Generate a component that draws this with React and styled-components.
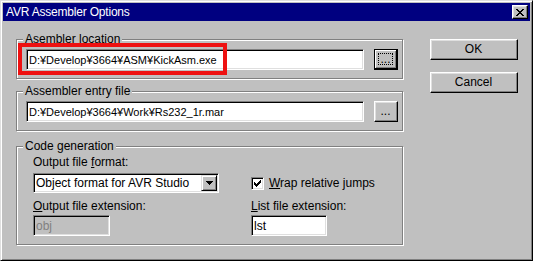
import React from "react";
import styled, { createGlobalStyle } from "styled-components";

const Global = createGlobalStyle`
  html, body { margin: 0; padding: 0; background: #c0c0c0; overflow: hidden; }
  #root { width: 533px; height: 261px; }
`;

const Window = styled.div`
  width: 533px;
  height: 261px;
  box-sizing: border-box;
  background: #c0c0c0;
  border: 1px solid;
  border-color: #dfdfdf #000 #000 #dfdfdf;
  box-shadow: inset 1px 1px #fff, inset -1px -1px #808080;
  padding: 2px;
  display: flex;
  flex-direction: column;
  font: 12px/14px "Liberation Sans", Arial, sans-serif;
  color: #000;
`;

const TitleBar = styled.div`
  height: 18px;
  flex: none;
  background: #000080;
  color: #fff;
  display: flex;
  align-items: center;
  justify-content: space-between;
  padding: 0 2px 0 3px;
`;

const Title = styled.span`
  font-size: 12px;
  letter-spacing: -0.2px;
`;

const CloseButton = styled.div`
  width: 16px;
  height: 14px;
  box-sizing: border-box;
  background: #c0c0c0;
  border: 1px solid;
  border-color: #fff #000 #000 #fff;
  box-shadow: inset -1px -1px #808080, inset 1px 1px #dfdfdf;
  display: flex;
  align-items: center;
  justify-content: center;
`;

const Body = styled.div`
  display: flex;
  gap: 27px;
  padding: 18px 0 0 13px;
`;

const LeftCol = styled.div`
  width: 387px;
  display: flex;
  flex-direction: column;
`;

const Group = styled.div`
  position: relative;
  box-sizing: border-box;
  border: 1px solid #808080;
  box-shadow: inset 1px 1px #fff, 1px 1px #fff;
  margin-top: ${(p) => p.$mt || 0}px;
  padding: ${(p) => p.$pad};
  height: ${(p) => (p.$h ? `${p.$h}px` : "auto")};
`;

const FileRow = styled.div`
  display: flex;
  gap: 10px;
  align-items: flex-start;
`;

const GroupLabel = styled.span`
  position: absolute;
  top: -8px;
  left: 6px;
  padding: 0 2px;
  background: #c0c0c0;
  white-space: nowrap;
`;

const Highlight = styled.div`
  position: absolute;
  left: 1px;
  top: 3px;
  width: 209px;
  height: 32px;
  box-sizing: border-box;
  border: 4px solid #ee1111;
  pointer-events: none;
`;

const TextField = styled.input`
  box-sizing: border-box;
  width: ${(p) => p.$w}px;
  height: 21px;
  margin: 0;
  padding: 0 1px 0 2px;
  font: inherit;
  font-size: ${(p) => p.$fs || 12}px;
  color: ${(p) => (p.disabled ? "#808080" : "#000")};
  background: ${(p) => (p.disabled ? "#c0c0c0" : "#fff")};
  border: 1px solid;
  border-color: #808080 #fff #fff #808080;
  box-shadow: inset 1px 1px #000, inset -1px -1px #dfdfdf;
  outline: none;
  &:disabled { -webkit-text-fill-color: #808080; opacity: 1; }
`;

const Button = styled.div`
  box-sizing: border-box;
  width: ${(p) => p.$w}px;
  height: 21px;
  background: #c0c0c0;
  border: 1px solid;
  border-color: ${(p) => (p.$default ? "#000" : "#fff #000 #000 #fff")};
  box-shadow: ${(p) =>
    p.$default
      ? "inset -1px -1px #000, inset 1px 1px #fff, inset -2px -2px #808080"
      : "inset -1px -1px #808080, inset 1px 1px #dfdfdf"};
  padding: ${(p) => (p.$default ? "3px 4px 4px 3px" : "2px 3px 3px 2px")};
  display: flex;
  flex: none;
`;

const Face = styled.span`
  flex: 1;
  display: flex;
  align-items: center;
  justify-content: center;
  border: 1px dotted ${(p) => (p.$focused ? "#000" : "transparent")};
  line-height: 12px;
`;

const RightCol = styled.div`
  display: flex;
  flex-direction: column;
  gap: 12px;
`;

const CodeGrid = styled.div`
  display: grid;
  grid-template-columns: 218px auto;
  align-items: center;
`;

const FieldLabel = styled.div`
  grid-column: ${(p) => (p.$span ? "1 / -1" : "auto")};
  margin-top: ${(p) => p.$mt || 0}px;
  white-space: nowrap;
  line-height: 14px;
`;

const Combo = styled.div`
  box-sizing: border-box;
  width: 186px;
  height: 20px;
  margin-top: 4px;
  background: #fff;
  border: 1px solid;
  border-color: #808080 #fff #fff #808080;
  box-shadow: inset 1px 1px #000, inset -1px -1px #dfdfdf;
  padding: 1px;
  display: flex;
  align-items: center;
`;

const ComboText = styled.span`
  flex: 1;
  padding-left: 1px;
  white-space: nowrap;
  overflow: hidden;
`;

const ComboButton = styled.div`
  width: 16px;
  height: 16px;
  box-sizing: border-box;
  background: #c0c0c0;
  border: 1px solid;
  border-color: #dfdfdf #000 #000 #dfdfdf;
  box-shadow: inset 1px 1px #fff, inset -1px -1px #808080;
  display: flex;
  align-items: center;
  justify-content: center;
`;

const CheckRow = styled.label`
  display: flex;
  align-items: center;
  gap: 5px;
  margin-top: 4px;
  white-space: nowrap;
`;

const CheckBox = styled.span`
  width: 13px;
  height: 13px;
  box-sizing: border-box;
  background: #fff;
  border: 1px solid;
  border-color: #808080 #fff #fff #808080;
  box-shadow: inset 1px 1px #000, inset -1px -1px #dfdfdf;
  display: flex;
  align-items: center;
  justify-content: center;
`;

const SmallField = styled(TextField)`
  margin-top: 2px;
`;

const checkPath = [
  [0, 2], [1, 3], [2, 4], [3, 3], [4, 2], [5, 1], [6, 0],
]
  .map(([x, y]) => `M${x} ${y}h1v3h-1z`)
  .join("");

export default function App() {
  return (
    <>
      <Global />
      <Window>
        <TitleBar>
          <Title>AVR Assembler Options</Title>
          <CloseButton>
            <svg width="8" height="7" viewBox="0 0 8 7" shapeRendering="crispEdges">
              <path
                d="M0 0h2v1h-2zM1 1h2v1h-2zM2 2h4v1h-4zM3 3h2v1h-2zM2 4h4v1h-4zM1 5h2v1h-2zM0 6h2v1h-2zM6 0h2v1h-2zM5 1h2v1h-2zM5 5h2v1h-2zM6 6h2v1h-2z"
                fill="#000"
              />
            </svg>
          </CloseButton>
        </TitleBar>
        <Body>
          <LeftCol>
            <Group $h={40} $pad="9px 0 0 9px">
              <GroupLabel>Asembler location</GroupLabel>
              <FileRow>
                <TextField $w={338} $fs={11} readOnly defaultValue="D:¥Develop¥3664¥ASM¥KickAsm.exe" />
                <Button $w={24} $default>
                  <Face $focused>...</Face>
                </Button>
              </FileRow>
              <Highlight />
            </Group>
            <Group $h={40} $mt={12} $pad="9px 0 0 9px">
              <GroupLabel>Assembler entry file</GroupLabel>
              <FileRow>
                <TextField $w={338} $fs={11} readOnly defaultValue="D:¥Develop¥3664¥Work¥Rs232_1r.mar" />
                <Button $w={24}>
                  <Face>...</Face>
                </Button>
              </FileRow>
            </Group>
            <Group $mt={15} $pad="8px 0 8px 16px">
              <GroupLabel>Code generation</GroupLabel>
              <CodeGrid>
                <FieldLabel $span>
                  Output file <u>f</u>ormat:
                </FieldLabel>
                <Combo>
                  <ComboText>Object format for AVR Studio</ComboText>
                  <ComboButton>
                    <svg width="7" height="4" viewBox="0 0 7 4" shapeRendering="crispEdges">
                      <path d="M0 0h7v1h-7zM1 1h5v1h-5zM2 2h3v1h-3zM3 3h1v1h-1z" fill="#000" />
                    </svg>
                  </ComboButton>
                </Combo>
                <CheckRow>
                  <CheckBox>
                    <svg width="7" height="7" viewBox="0 0 7 7" shapeRendering="crispEdges">
                      <path d={checkPath} fill="#000" />
                    </svg>
                  </CheckBox>
                  <span>
                    <u>W</u>rap relative jumps
                  </span>
                </CheckRow>
                <FieldLabel $mt={6}>
                  <u>O</u>utput file extension:
                </FieldLabel>
                <FieldLabel $mt={6}>
                  <u>L</u>ist file extension:
                </FieldLabel>
                <SmallField $w={77} disabled defaultValue="obj" />
                <SmallField $w={76} readOnly defaultValue="lst" />
              </CodeGrid>
            </Group>
          </LeftCol>
          <RightCol>
            <Button $w={88}>
              <Face>OK</Face>
            </Button>
            <Button $w={88}>
              <Face>Cancel</Face>
            </Button>
          </RightCol>
        </Body>
      </Window>
    </>
  );
}
